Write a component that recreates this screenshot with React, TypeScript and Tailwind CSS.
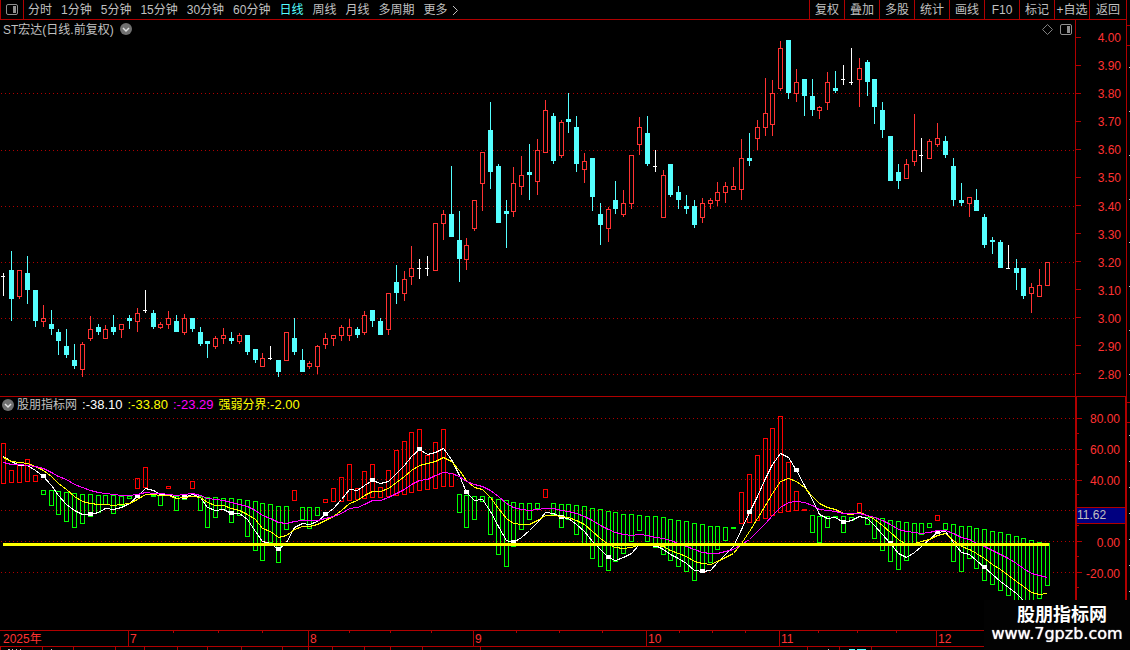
import { useState } from "react"

// kind, high, body top, body bottom, low (chart units, y grows down)
// r = up day (hollow), c = down day (filled), w = flat day (cross)
type Candle = [kind: "r" | "c" | "w", high: number, top: number, bottom: number, low: number]

// kind, top, bottom
type Bar = [kind: "r" | "g", top: number, bottom: number]

const PERIODS = ["分时", "1分钟", "5分钟", "15分钟", "30分钟", "60分钟", "日线", "周线", "月线", "多周期"]
const ACTIONS = ["复权", "叠加", "多股", "统计", "画线", "F10", "标记", "+自选"]

const PRICES = ["4.00", "3.90", "3.80", "3.70", "3.60", "3.50", "3.40", "3.30", "3.20", "3.10", "3.00", "2.90", "2.80"]
// the blank row is where the cursor value sits
const LEVELS = ["80.00", "60.00", "40.00", "", "0.00", "-20.00"]

const PRICE_GRID = [93, 150, 206, 262, 318, 374]
const LEVEL_GRID = [418, 449, 479, 510, 541, 572]

const MONTHS = [
  { label: "2025年", width: "w-[128px]", parts: 0 },
  { label: "7",      width: "w-[180px]", parts: 4 },
  { label: "8",      width: "w-[165px]", parts: 4 },
  { label: "9",      width: "w-[173px]", parts: 4 },
  { label: "10",     width: "w-[133px]", parts: 4 },
  { label: "11",     width: "w-[157px]", parts: 4 },
  { label: "12",     width: "flex-1",    parts: 0 },
]

const FOOTER_MARKS = [0, 42, 73, 115, 144, 177, 207, 241, 282, 308, 332, 364, 390, 422, 480, 807, 839, 871]

const CANDLES: Candle[] = [
  ["w", 273, 276, 277, 296], ["c", 251, 270, 299, 321], ["r", 270, 270, 297, 299], ["c", 256, 273, 290, 304],
  ["c", 290, 290, 321, 327], ["r", 305, 318, 322, 327], ["c", 310, 324, 329, 335], ["c", 329, 332, 341, 355],
  ["c", 329, 346, 355, 358], ["c", 344, 360, 366, 369], ["r", 342, 344, 370, 377], ["r", 316, 329, 339, 341],
  ["c", 324, 327, 332, 335], ["r", 325, 329, 339, 339], ["c", 315, 327, 332, 335], ["r", 324, 324, 330, 338],
  ["c", 315, 318, 321, 329], ["r", 308, 313, 322, 332], ["w", 290, 310, 311, 313], ["c", 310, 313, 327, 329],
  ["r", 322, 324, 328, 329], ["r", 311, 318, 325, 329], ["c", 315, 321, 332, 332], ["r", 314, 318, 333, 335],
  ["c", 318, 318, 329, 332], ["c", 327, 332, 344, 346], ["c", 341, 341, 344, 358], ["r", 336, 338, 347, 349],
  ["r", 328, 335, 339, 344], ["c", 332, 338, 341, 344], ["r", 333, 335, 342, 344], ["c", 335, 335, 352, 355],
  ["c", 349, 349, 360, 363], ["r", 353, 358, 367, 367], ["w", 346, 358, 359, 360], ["c", 360, 360, 372, 377],
  ["r", 332, 332, 361, 361], ["c", 318, 338, 352, 355], ["c", 349, 360, 372, 372], ["r", 361, 363, 367, 369],
  ["r", 345, 346, 367, 374], ["r", 333, 338, 345, 349], ["r", 335, 335, 339, 346], ["r", 325, 327, 336, 341],
  ["r", 319, 327, 336, 341], ["c", 327, 329, 335, 338], ["r", 311, 315, 333, 335], ["c", 310, 310, 321, 327],
  ["c", 318, 321, 335, 335], ["r", 293, 293, 330, 335], ["c", 265, 282, 293, 304], ["r", 271, 279, 294, 301],
  ["r", 246, 268, 277, 285], ["w", 259, 268, 269, 279], ["w", 256, 268, 269, 276], ["r", 223, 223, 271, 271],
  ["r", 210, 214, 224, 240], ["c", 166, 214, 237, 237], ["c", 211, 240, 259, 282], ["r", 238, 245, 260, 270],
  ["r", 200, 200, 229, 231], ["r", 152, 152, 184, 211], ["c", 102, 130, 172, 189], ["c", 164, 166, 223, 223],
  ["c", 200, 211, 214, 248], ["r", 167, 183, 212, 217], ["r", 156, 175, 187, 195], ["c", 144, 172, 175, 200],
  ["r", 139, 150, 182, 195], ["r", 100, 110, 153, 153], ["c", 113, 116, 161, 164], ["r", 120, 122, 156, 158],
  ["c", 93, 119, 122, 133], ["c", 116, 127, 164, 172], ["r", 153, 161, 170, 183], ["c", 158, 158, 197, 211],
  ["c", 203, 214, 225, 245], ["r", 207, 209, 229, 242], ["c", 181, 200, 209, 214], ["r", 190, 203, 215, 217],
  ["r", 155, 155, 204, 209], ["r", 117, 127, 145, 155], ["c", 116, 133, 164, 166], ["w", 150, 166, 167, 172],
  ["r", 170, 175, 218, 218], ["c", 164, 164, 195, 197], ["c", 186, 192, 200, 209], ["c", 195, 206, 209, 214],
  ["c", 200, 206, 225, 228], ["r", 198, 203, 218, 223], ["r", 198, 200, 204, 209], ["r", 182, 192, 201, 206],
  ["r", 182, 186, 193, 203], ["r", 167, 186, 190, 190], ["r", 139, 158, 190, 200], ["c", 133, 158, 161, 166],
  ["r", 120, 127, 139, 150], ["r", 78, 113, 128, 136], ["r", 80, 93, 125, 136], ["r", 41, 48, 89, 91],
  ["c", 40, 40, 93, 99], ["r", 69, 82, 94, 102], ["c", 79, 79, 96, 116], ["c", 79, 96, 110, 116],
  ["r", 106, 107, 111, 119], ["r", 72, 82, 103, 110], ["c", 71, 88, 91, 93], ["w", 65, 79, 80, 85],
  ["w", 48, 82, 83, 85], ["r", 58, 68, 80, 107], ["c", 60, 62, 82, 96], ["c", 79, 79, 107, 124],
  ["c", 102, 110, 130, 138], ["c", 136, 136, 181, 181], ["c", 164, 172, 181, 189], ["r", 159, 164, 179, 179],
  ["r", 114, 150, 162, 166], ["w", 138, 155, 156, 172], ["r", 139, 141, 159, 159], ["r", 123, 138, 145, 147],
  ["c", 136, 141, 155, 158], ["c", 158, 166, 200, 206], ["c", 183, 200, 203, 206], ["r", 197, 197, 204, 217],
  ["c", 189, 200, 211, 211], ["c", 214, 217, 245, 248], ["c", 237, 240, 242, 254], ["c", 240, 242, 268, 268],
  ["w", 245, 268, 269, 269], ["c", 259, 268, 273, 290], ["c", 268, 268, 296, 299], ["r", 283, 287, 294, 313],
  ["r", 269, 285, 297, 297], ["r", 262, 262, 286, 286],
]

const BARS: Bar[] = [
  ["r", 443, 484], ["r", 470, 483], ["r", 464, 483], ["r", 459, 482], ["r", 475, 482], ["g", 490, 495],
  ["g", 490, 506], ["g", 491, 515], ["g", 492, 522], ["g", 493, 528], ["g", 494, 524], ["g", 494, 517],
  ["g", 495, 513], ["g", 495, 505], ["g", 495, 514], ["g", 496, 506], ["g", 496, 499], ["r", 478, 489],
  ["r", 467, 488], ["g", 495, 497], ["g", 495, 506], ["r", 486, 489], ["g", 496, 511], ["g", 496, 500],
  ["r", 481, 489], ["g", 496, 511], ["g", 497, 528], ["g", 497, 518], ["g", 498, 510], ["g", 498, 523],
  ["g", 499, 516], ["g", 500, 537], ["g", 501, 551], ["g", 503, 561], ["g", 504, 543], ["g", 506, 563],
  ["g", 506, 530], ["r", 490, 501], ["g", 507, 520], ["g", 507, 529], ["g", 507, 516], ["r", 499, 503],
  ["r", 488, 502], ["r", 477, 502], ["r", 464, 501], ["r", 488, 500], ["r", 471, 499], ["r", 464, 498],
  ["r", 487, 498], ["r", 470, 497], ["r", 450, 496], ["r", 441, 495], ["r", 432, 493], ["r", 429, 491],
  ["r", 455, 490], ["r", 442, 489], ["r", 429, 487], ["r", 473, 487], ["g", 494, 513], ["g", 495, 528],
  ["g", 496, 520], ["g", 496, 502], ["g", 497, 535], ["g", 499, 555], ["g", 500, 567], ["g", 502, 547],
  ["g", 503, 530], ["g", 503, 520], ["g", 503, 509], ["r", 489, 498], ["g", 503, 515], ["g", 504, 528],
  ["g", 504, 520], ["g", 505, 535], ["g", 506, 544], ["g", 508, 559], ["g", 509, 567], ["g", 511, 571],
  ["g", 512, 562], ["g", 514, 554], ["g", 514, 542], ["g", 515, 531], ["g", 516, 542], ["g", 516, 548],
  ["g", 517, 555], ["g", 519, 561], ["g", 520, 567], ["g", 521, 572], ["g", 523, 581], ["g", 524, 572],
  ["g", 526, 563], ["g", 526, 550], ["g", 527, 541], ["g", 527, 529], ["r", 492, 524], ["r", 474, 523],
  ["r", 455, 521], ["r", 438, 519], ["r", 428, 516], ["r", 416, 513], ["r", 462, 512], ["r", 491, 511],
  ["r", 509, 511], ["g", 515, 533], ["g", 516, 543], ["g", 516, 528], ["g", 516, 518], ["g", 516, 533],
  ["g", 517, 521], ["r", 503, 513], ["g", 517, 525], ["g", 517, 539], ["g", 518, 551], ["g", 520, 562],
  ["g", 521, 570], ["g", 522, 561], ["g", 523, 544], ["g", 523, 535], ["g", 523, 528], ["r", 515, 521],
  ["g", 523, 530], ["g", 524, 562], ["g", 526, 572], ["g", 526, 559], ["g", 528, 569], ["g", 529, 581],
  ["g", 531, 585], ["g", 532, 591], ["g", 534, 596], ["g", 536, 602], ["g", 538, 606], ["g", 540, 604],
  ["g", 542, 599], ["g", 543, 586],
]

const FAST = [
  456, 461, 465, 465, 470, 476, 485, 495, 504, 510, 514, 514, 512, 508, 509, 507, 503, 496, 488, 490,
  494, 494, 498, 497, 494, 497, 507, 510, 509, 513, 513, 519, 531, 541, 543, 549, 542, 527, 523, 524,
  521, 514, 508, 499, 489, 490, 485, 480, 483, 481, 473, 465, 456, 449, 454, 452, 448, 459, 475, 492,
  500, 499, 511, 526, 540, 542, 537, 530, 522, 512, 513, 517, 518, 524, 531, 541, 549, 557, 560, 557,
  553, 544, 543, 545, 549, 554, 558, 563, 570, 571, 570, 562, 554, 546, 529, 512, 496, 478, 464, 453,
  457, 470, 485, 499, 514, 518, 517, 522, 520, 516, 518, 525, 534, 543, 553, 557, 552, 546, 539, 532,
  531, 542, 552, 554, 560, 567, 574, 581, 587, 593, 600, 607, 610, 608,
]

const MIDDLE = [
  457, 461, 462, 463, 466, 470, 476, 483, 489, 496, 501, 503, 504, 504, 505, 504, 503, 499, 494, 494,
  495, 495, 498, 497, 496, 497, 502, 505, 505, 508, 510, 514, 519, 528, 531, 537, 535, 529, 526, 526,
  524, 520, 516, 510, 503, 500, 495, 491, 491, 488, 482, 476, 470, 465, 463, 461, 457, 461, 470, 480,
  487, 489, 497, 508, 518, 523, 524, 524, 520, 515, 515, 516, 517, 520, 524, 531, 538, 544, 547, 548,
  547, 544, 544, 545, 546, 550, 553, 556, 561, 563, 564, 561, 557, 553, 543, 531, 518, 505, 493, 481,
  478, 481, 487, 496, 503, 507, 509, 513, 514, 512, 515, 519, 525, 532, 539, 544, 543, 541, 539, 535,
  533, 540, 546, 549, 553, 558, 564, 569, 575, 581, 586, 592, 594, 593,
]

const SLOW = [
  462, 464, 464, 465, 466, 468, 472, 476, 479, 484, 487, 490, 492, 493, 494, 495, 495, 494, 492, 493,
  493, 494, 495, 494, 493, 495, 498, 499, 500, 502, 504, 506, 510, 515, 518, 522, 523, 521, 520, 520,
  520, 518, 516, 513, 508, 507, 504, 500, 500, 497, 493, 489, 484, 480, 479, 475, 472, 473, 476, 481,
  484, 486, 490, 496, 503, 507, 509, 510, 509, 508, 508, 510, 511, 513, 516, 520, 525, 529, 532, 534,
  535, 534, 535, 537, 538, 540, 543, 546, 549, 552, 553, 553, 551, 549, 544, 539, 531, 523, 515, 507,
  502, 501, 502, 505, 509, 510, 511, 513, 513, 513, 515, 517, 520, 524, 529, 531, 532, 533, 532, 530,
  530, 533, 537, 539, 543, 546, 550, 554, 558, 563, 568, 573, 575, 577,
]

// 13 days take 102 units
const dayX = (i: number) => 3 + 8 * i - Math.floor((i * 2) / 13)

const toPoints = (ys: number[]) => ys.map((y, i) => `${dayX(i) + 0.5},${y + 0.5}`).join(" ")

export default function App() {
  const [period, setPeriod] = useState("日线")

  return (
    <div className="relative flex h-screen min-h-[400px] flex-col overflow-hidden bg-black font-['Liberation_Sans','Noto_Sans_CJK_SC',sans-serif] text-xs text-[#c0c0c0]">

      {/* ── Toolbar ── */}
      <header className="mr-[3px] flex h-5 shrink-0 border-b border-[#b00000] leading-[17px] whitespace-nowrap">
        <button type="button" aria-label="侧栏" className="flex w-6 items-center justify-center border-x border-[#b00000]">
          <PanelIcon />
        </button>
        <nav className="flex gap-[9px] pt-0.5 pl-1">
          {PERIODS.map((p) => (
            <button
              key={p}
              type="button"
              onClick={() => setPeriod(p)}
              className={p === period ? "text-[#54ffff]" : "text-[#c0c0c0]"}
            >
              {p}
            </button>
          ))}
          <button type="button" className="flex items-center gap-1">
            更多
            <svg width="7" height="11" viewBox="0 0 7 11" fill="none" stroke="#c0c0c0">
              <path d="M1 1l4.500 4.500L1 10" />
            </svg>
          </button>
        </nav>
        <div className="ml-auto flex">
          {ACTIONS.map((a) => (
            <button key={a} type="button" className="w-[35px] border-l border-[#b00000] pt-0.5 text-center">
              {a}
            </button>
          ))}
          <button type="button" className="w-[38px] border-x border-[#b00000] pt-0.5 text-center">返回</button>
        </div>
      </header>

      {/* ── Price panel ── */}
      <section className="flex min-h-0 flex-[376_1_0%]">
        <div className="relative min-w-0 flex-1">
          <PriceChart />
          <div className="absolute top-0 left-[3px] flex h-[18px] items-center gap-1.5">
            <h1 className="pt-0.5">ST宏达(日线.前复权)</h1>
            <ChevronDot />
          </div>
          <div className="absolute top-1 right-[3px] flex items-center gap-[7px]">
            <svg width="11" height="11" viewBox="0 0 11 11" fill="none" stroke="#808080">
              <path d="M5.500 0.500l5 5-5 5-5-5z" />
            </svg>
            <PanelIcon />
          </div>
        </div>
        <div className="flex w-[52px] flex-col border-x border-[#b00000] pt-[3px] pb-2 text-[#ff3232]">
          {PRICES.map((p) => (
            <AxisLabel key={p} text={p} />
          ))}
        </div>
        <EdgeStrip />
      </section>

      <div className="mr-[3px] h-px shrink-0 bg-[#b00000]" />

      {/* ── Indicator panel ── */}
      <section className="flex min-h-0 flex-[233_1_0%]">
        <div className="relative min-w-0 flex-1">
          <IndicatorChart />
          <div className="absolute top-0 left-[2px] flex h-4 items-center gap-[5px] whitespace-nowrap">
            <div className="flex items-center gap-[3px]">
              <ChevronDot />
              <h2>股朋指标网</h2>
            </div>
            <span className="text-[13px] text-white">:-38.10</span>
            <span className="text-[13px] text-[#ffff00]">:-33.80</span>
            <span className="text-[13px] text-[#ff00ff]">:-23.29</span>
            <span className="text-[#ffff00]">强弱分界<span className="text-[13px]">:-2.00</span></span>
          </div>
        </div>
        <div className="relative flex w-[52px] flex-col border-x-2 border-[#b00000] pt-[6px] pb-[42px] text-[#ff3232]">
          {LEVELS.map((l) => (
            <AxisLabel key={l} text={l} minor />
          ))}
          <div className="absolute top-[110px] left-0 h-[17px] w-full border-y border-[#b00000] bg-[#000080] leading-[15px] text-[#c0c0c0]">
            11.62
          </div>
        </div>
        <EdgeStrip />
      </section>

      {/* ── Time axis ── */}
      <div className="flex h-[17px] shrink-0 border-y border-[#b00000] leading-[17px] text-[#ff3232]">
        {MONTHS.map((m, i) => (
          <div key={m.label} className={`relative ${m.width} ${i > 0 ? "border-l border-[#b00000] pl-px" : "pl-[3px]"}`}>
            {m.label}
            {m.parts > 0 && (
              <div className="absolute inset-x-0 top-0 grid h-0.5 grid-cols-4">
                <i className="border-r border-[#b00000]" />
                <i className="border-r border-[#b00000]" />
                <i className="border-r border-[#b00000]" />
              </div>
            )}
          </div>
        ))}
      </div>
      <svg className="block h-[3px] w-full shrink-0" viewBox="0 0 1130 3" preserveAspectRatio="none" shapeRendering="crispEdges">
        {FOOTER_MARKS.map((x) => (
          <rect key={x} x={x} y="0" width="1" height="3" fill="#b00000" />
        ))}
        <path d="M8 2.500h2m2 0h1m3 0h1m3 0h1M51 2.500h1M828 2.500h1" stroke="#c0c0c0" />
        <path d="M849 2.500h6m2 0h9" stroke="#54ffff" />
      </svg>

      {/* ── Site badge ── */}
      <div className="absolute right-0 bottom-0 flex h-[50px] w-[146px] flex-col items-center bg-[#020202] pt-[5px] text-white">
        <strong className="pl-2.5 text-lg leading-5">股朋指标网</strong>
        <span className="font-['DejaVu_Sans',sans-serif] text-base leading-[18px] [text-shadow:0_0_1px_#ffffff]">www.7gpzb.com</span>
      </div>
    </div>
  )
}

// ─── Axis ─────────────────────────────────────────────────────────────────────

function AxisLabel({ text, minor = false }: { text: string; minor?: boolean }) {
  return (
    <div className="relative flex min-h-0 flex-1 items-center justify-between pr-[5px]">
      <span className="h-px w-[5px] bg-[#b00000]" />
      <span className="pt-0.5 leading-3">{text}</span>
      {minor && <span className="absolute bottom-0 left-0 h-px w-0.5 bg-[#b00000]" />}
    </div>
  )
}

// Sliver of the neighbouring quote panel
function EdgeStrip() {
  return (
    <div className="flex w-[3px] flex-col pt-[5px]">
      <div className="h-[21px] border-y border-[#b00000]" />
      <div className="flex flex-1 flex-col items-end justify-around">
        <i className="h-px w-px bg-[#c0c0c0]" />
        <i className="h-px w-px bg-[#c0c0c0]" />
        <i className="h-px w-px bg-[#c0c0c0]" />
        <i className="h-px w-px bg-[#c0c0c0]" />
        <i className="h-px w-px bg-[#c0c0c0]" />
        <i className="h-px w-px bg-[#c0c0c0]" />
        <i className="h-px w-px bg-[#c0c0c0]" />
        <i className="h-px w-px bg-[#c0c0c0]" />
      </div>
    </div>
  )
}

// ─── Charts ───────────────────────────────────────────────────────────────────

function GridLines({ rows }: { rows: number[] }) {
  return (
    <g stroke="#b00000" strokeDasharray="1 3">
      {rows.map((y) => (
        <line key={y} x1="1" x2="1074" y1={y + 0.5} y2={y + 0.5} />
      ))}
    </g>
  )
}

function PriceChart() {
  return (
    <svg
      className="absolute inset-0 h-full w-full"
      viewBox="0 20 1075 376"
      preserveAspectRatio="none"
      shapeRendering="crispEdges"
    >
      <GridLines rows={PRICE_GRID} />
      {CANDLES.map(([kind, high, top, bottom, low], i) => {
        const x = dayX(i)
        if (kind === "w") {
          return (
            <g key={i} fill="#ffffff">
              <rect x={x} y={high} width="1" height={low - high} />
              <rect x={x - 2} y={top} width="4" height="1" />
            </g>
          )
        }
        if (kind === "c") {
          return (
            <g key={i} fill="#54ffff">
              <rect x={x} y={high} width="1" height={low - high} />
              <rect x={x - 2} y={top} width="5" height={bottom - top} />
            </g>
          )
        }
        return (
          <g key={i}>
            <rect x={x} y={high} width="1" height={low - high} fill="#ff3232" />
            <rect x={x - 1.5} y={top + 0.5} width="4" height={bottom - top - 1} fill="#000000" stroke="#ff3232" />
          </g>
        )
      })}
    </svg>
  )
}

function IndicatorChart() {
  return (
    <svg
      className="absolute inset-0 h-full w-full"
      viewBox="0 397 1075 233"
      preserveAspectRatio="none"
      shapeRendering="crispEdges"
    >
      <GridLines rows={LEVEL_GRID} />
      {BARS.map(([kind, top, bottom], i) => (
        <rect
          key={i}
          x={dayX(i) - 1.5}
          y={top + 0.5}
          width="4"
          height={bottom - top - 1}
          fill="none"
          stroke={kind === "r" ? "#ff0000" : "#00ff00"}
        />
      ))}
      <polyline points={toPoints(FAST)} fill="none" stroke="#ffffff" />
      {FAST.map((y, i) => i % 6 === 5 && (
        <rect key={i} x={dayX(i) - 2} y={y - 2} width="5" height="4" fill="#ffffff" />
      ))}
      <polyline points={toPoints(MIDDLE)} fill="none" stroke="#ffff00" />
      <polyline points={toPoints(SLOW)} fill="none" stroke="#ff00ff" />
      <rect x="3" y="543" width="1046" height="3" fill="#ffff00" />
    </svg>
  )
}

// ─── Icons ────────────────────────────────────────────────────────────────────

function PanelIcon() {
  return (
    <svg width="12" height="11" viewBox="0 0 12 11" fill="none" stroke="#909090">
      <rect x="0.500" y="0.500" width="11" height="10" rx="1.500" />
      <rect x="7" y="2" width="3" height="7" fill="#909090" stroke="none" />
    </svg>
  )
}

function ChevronDot() {
  return (
    <svg width="12" height="12" viewBox="0 0 12 12" fill="none">
      <circle cx="6" cy="6" r="6" fill="#707070" />
      <path d="M3 5l3 3 3-3" stroke="#e0e0e0" strokeWidth="1.500" />
    </svg>
  )
}
